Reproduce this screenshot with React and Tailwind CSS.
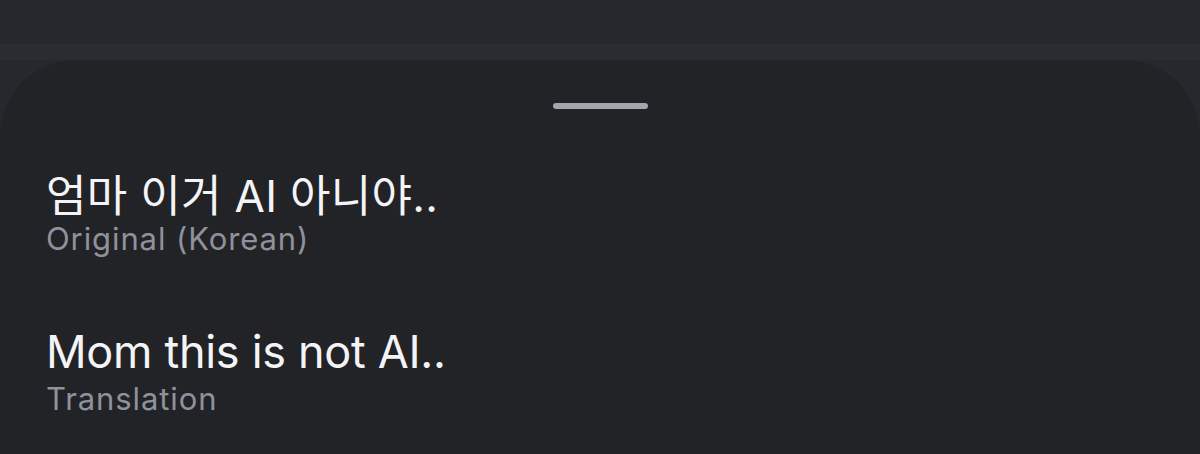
export default function App() {
  const font = { fontFamily: 'Inter, "Noto Sans CJK KR", sans-serif' };
  return (
    <div className="w-[1200px] h-[454px] overflow-hidden bg-[#25282c] flex flex-col" style={font}>
      <div className="h-[44px] shrink-0 bg-[#25282c]" />
      <div className="h-[16px] shrink-0 bg-[#292c30]" />
      <div className="flex-1 bg-[#222327] rounded-t-[76px] flex flex-col">
        <div className="flex justify-center pt-[43px]">
          <div className="w-[95px] h-[6px] rounded-full bg-[#a4a6ae]" />
        </div>
        <div className="pl-[46px] pt-[61px] flex flex-col">
          <div className="text-[44px] leading-[52px] text-[#f4f4f6] tracking-[0.3px]">엄마 이거 AI 아니야..</div>
          <div className="text-[31px] leading-[36px] text-[#8f929b] tracking-[0.9px] -mt-px">Original (Korean)</div>
          <div className="text-[45px] leading-[54px] text-[#f4f4f6] mt-[68px] tracking-[-0.3px]">Mom this is not AI..</div>
          <div className="text-[31px] leading-[36px] text-[#8f929b] tracking-[0.9px] mt-[2px]">Translation</div>
        </div>
      </div>
    </div>
  );
}
